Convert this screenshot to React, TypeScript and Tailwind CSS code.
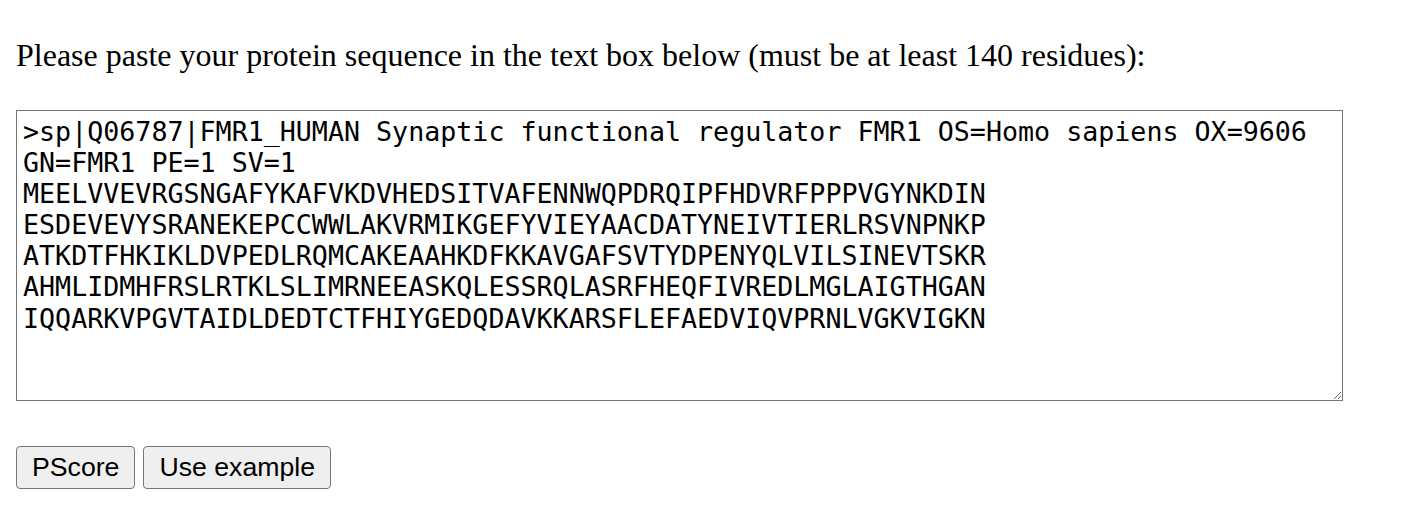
import React from "react";

const SEQ = `>sp|Q06787|FMR1_HUMAN Synaptic functional regulator FMR1 OS=Homo sapiens OX=9606 GN=FMR1 PE=1 SV=1
MEELVVEVRGSNGAFYKAFVKDVHEDSITVAFENNWQPDRQIPFHDVRFPPPVGYNKDIN
ESDEVEVYSRANEKEPCCWWLAKVRMIKGEFYVIEYAACDATYNEIVTIERLRSVNPNKP
ATKDTFHKIKLDVPEDLRQMCAKEAAHKDFKKAVGAFSVTYDPENYQLVILSINEVTSKR
AHMLIDMHFRSLRTKLSLIMRNEEASKQLESSRQLASRFHEQFIVREDLMGLAIGTHGAN
IQQARKVPGVTAIDLDEDTCTFHIYGEDQDAVKKARSFLEFAEDVIQVPRNLVGKVIGKN`;

export default function App() {
  return (
    <div className="bg-white min-h-screen px-[16px] pt-[37px] text-black">
      <p className="text-[32px] leading-[37px] m-0" style={{ fontFamily: '"Liberation Serif", serif' }}>
        Please paste your protein sequence in the text box below (must be at least 140 residues):
      </p>
      <div className="mt-[36px]">
        <textarea
          defaultValue={SEQ}
          spellCheck={false}
          className="block w-[1327px] h-[291px] border border-[#767676] bg-white pt-[5px] pl-[6px] pr-[6px] text-[26.67px] leading-[31.1px] text-black outline-none"
          style={{ fontFamily: '"DejaVu Sans Mono", monospace' }}
        />
      </div>
      <div className="mt-[45px] flex gap-[8px]" style={{ fontFamily: '"Liberation Sans", Arial, sans-serif' }}>
        <button className="h-[43px] px-[15px] bg-[#efefef] border border-[#767676] rounded-[4px] text-[26.67px] leading-none text-black">
          PScore
        </button>
        <button className="h-[43px] px-[15px] bg-[#efefef] border border-[#767676] rounded-[4px] text-[26.67px] leading-none text-black">
          Use example
        </button>
      </div>
    </div>
  );
}
